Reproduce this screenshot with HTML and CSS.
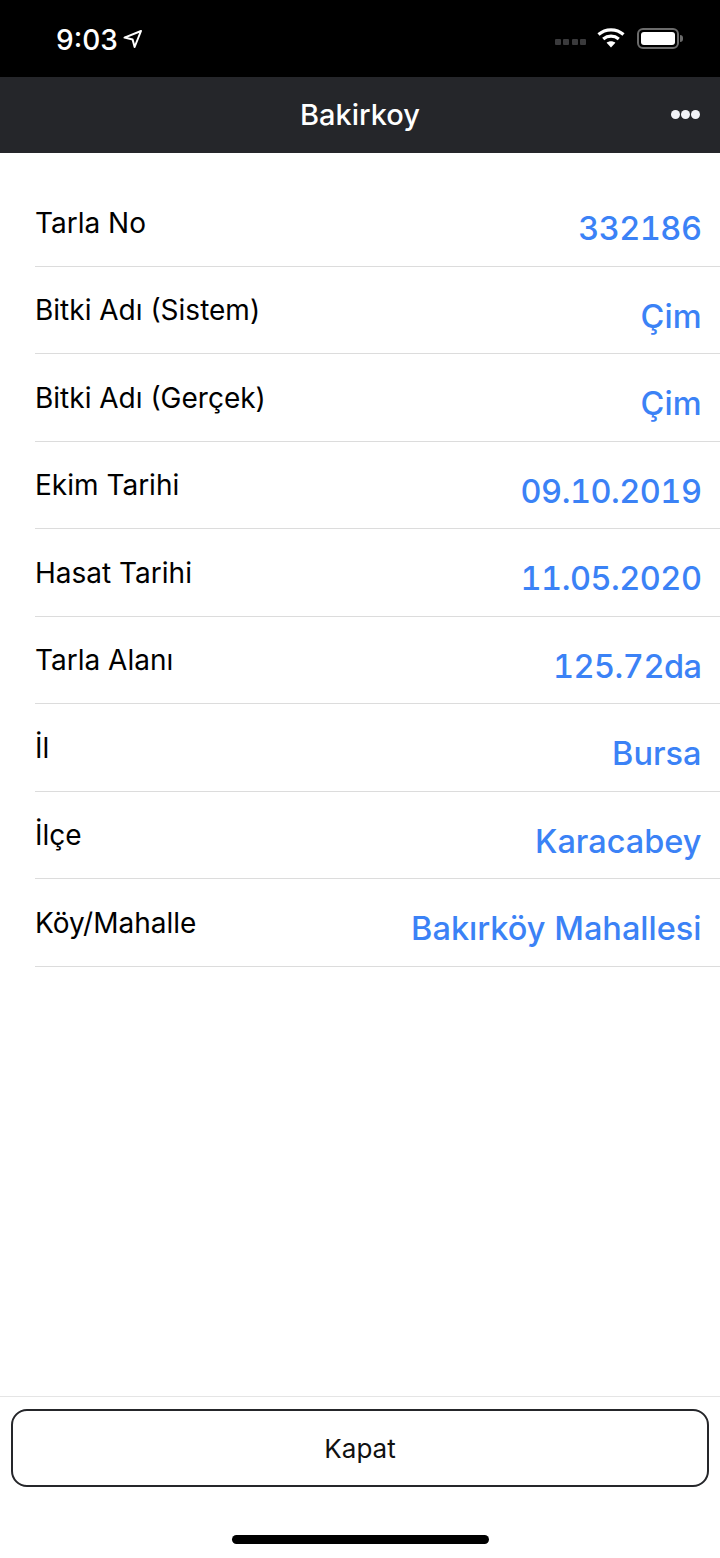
FILE: index.html
```html
<!DOCTYPE html>
<html lang="tr">
<head>
  <meta charset="UTF-8">
  <meta name="viewport" content="width=device-width, initial-scale=1.0">
  <title>Bakirkoy</title>
  <link rel="stylesheet" href="styles.css">
</head>
<body>
  <div class="screen">
    <!-- Status bar -->
    <div class="status-bar">
      <div class="status-left">
        <span class="clock">9:03</span>
        <svg class="location" width="20" height="20" viewBox="0 0 20 20">
          <path d="M18 2 L1.5 8.6 L9.6 10.4 L11.6 18 Z" fill="none" stroke="#fff" stroke-width="2" stroke-linejoin="round"/>
        </svg>
      </div>
      <div class="status-right">
        <div class="signal"><i></i><i></i><i></i><i></i></div>
        <svg class="wifi" width="28" height="20" viewBox="0 0 28 20">
          <path d="M1.5 6.5 C8.5 0.2 19.5 0.2 26.5 6.5" fill="none" stroke="#fff" stroke-width="3.2"/>
          <path d="M6.2 11 C10.8 7.2 17.2 7.2 21.8 11" fill="none" stroke="#fff" stroke-width="3.2"/>
          <path d="M14 19.5 L9.6 14.8 C12.2 12.8 15.8 12.8 18.4 14.8 Z" fill="#fff"/>
        </svg>
        <div class="battery">
          <div class="battery-fill"></div>
        </div>
        <div class="battery-cap"></div>
      </div>
    </div>

    <!-- Navigation bar -->
    <div class="nav-bar">
      <span class="nav-title">Bakirkoy</span>
      <div class="nav-more"><i></i><i></i><i></i></div>
    </div>

    <!-- Field details -->
    <div class="details">
      <div class="row"><span class="label">Tarla No</span><span class="value num">332186</span></div>
      <div class="row"><span class="label">Bitki Adı (Sistem)</span><span class="value">Çim</span></div>
      <div class="row"><span class="label">Bitki Adı (Gerçek)</span><span class="value">Çim</span></div>
      <div class="row"><span class="label">Ekim Tarihi</span><span class="value num">09.10.2019</span></div>
      <div class="row"><span class="label">Hasat Tarihi</span><span class="value num">11.05.2020</span></div>
      <div class="row"><span class="label">Tarla Alanı</span><span class="value num">125.72da</span></div>
      <div class="row"><span class="label">İl</span><span class="value">Bursa</span></div>
      <div class="row"><span class="label">İlçe</span><span class="value">Karacabey</span></div>
      <div class="row"><span class="label">Köy/Mahalle</span><span class="value">Bakırköy Mahallesi</span></div>
    </div>

    <!-- Footer with close button -->
    <div class="footer">
      <button class="close-btn">Kapat</button>
    </div>
    <div class="home-area"><div class="home-indicator"></div></div>
  </div>
</body>
</html>
```

FILE: styles.css
```css
* {
  box-sizing: border-box;
}
body {
  margin: 0;
  background-color: #fff;
  font-family: Inter, "Liberation Sans", sans-serif;
}
.screen {
  width: 720px;
  height: 1558px;
  display: flex;
  flex-direction: column;
  overflow: hidden;
}
.status-bar {
  height: 77px;
  flex: none;
  background-color: #000;
  color: #fff;
  display: flex;
  justify-content: space-between;
  align-items: center;
  padding: 0 37px 0 56px;
}
.status-left {
  display: flex;
  align-items: center;
  gap: 5px;
}
.clock {
  font-size: 28px;
  font-weight: 500;
  padding-top: 2px;
}
.status-right {
  display: flex;
  align-items: center;
}
.signal {
  display: flex;
  gap: 2.5px;
  margin-right: 11px;
  margin-top: 7px;
}
.signal i {
  width: 6px;
  height: 6px;
  border-radius: 1px;
  background-color: #3a3a3c;
}
.wifi {
  margin-right: 12px;
  margin-top: -2px;
}
.battery {
  width: 42px;
  height: 21px;
  border: 2px solid #6b6b6b;
  border-radius: 6px;
  padding: 2px;
}
.battery-fill {
  height: 100%;
  background-color: #fff;
  border-radius: 3px;
}
.battery-cap {
  width: 3px;
  height: 7px;
  margin-left: 1px;
  background-color: #6b6b6b;
  border-radius: 0 3px 3px 0;
}
.nav-bar {
  height: 76px;
  flex: none;
  background-color: #25262a;
  color: #fff;
  display: flex;
  align-items: center;
  justify-content: center;
  position: relative;
}
.nav-title {
  font-size: 29px;
  font-weight: 500;
  margin-top: -2px;
}
.nav-more {
  position: absolute;
  right: 20px;
  top: 33px;
  display: flex;
  gap: 1px;
}
.nav-more i {
  width: 9px;
  height: 9px;
  border-radius: 50%;
  background-color: #f2f2f7;
}
.details {
  flex: 1;
  padding-top: 26.3px;
}
.row {
  height: 87.5px;
  margin-left: 35px;
  padding-right: 18.5px;
  border-bottom: 1px solid #dcdcdc;
  display: flex;
  justify-content: space-between;
  align-items: center;
}
.label {
  font-size: 28px;
  color: #000;
  margin-top: 0;
}
.value {
  font-size: 32.5px;
  font-weight: 500;
  color: #3b82f6;
  margin-top: 12px;
  font-variant-numeric: tabular-nums;
}
.value.num {
  letter-spacing: -0.5px;
}
.footer {
  flex: none;
  height: 91px;
  border-top: 1px solid #e5e5e5;
  padding: 12px 11px 0;
}
.close-btn {
  display: block;
  width: 100%;
  height: 78px;
  padding: 0;
  background-color: #fff;
  border: 2px solid #25262a;
  border-radius: 16px;
  font-family: inherit;
  font-size: 26px;
  font-weight: 400;
  color: #111;
}
.home-area {
  flex: none;
  height: 71px;
  padding-top: 48px;
}
.home-indicator {
  width: 257px;
  height: 9px;
  margin: 0 auto;
  border-radius: 5px;
  background-color: #000;
}
```
